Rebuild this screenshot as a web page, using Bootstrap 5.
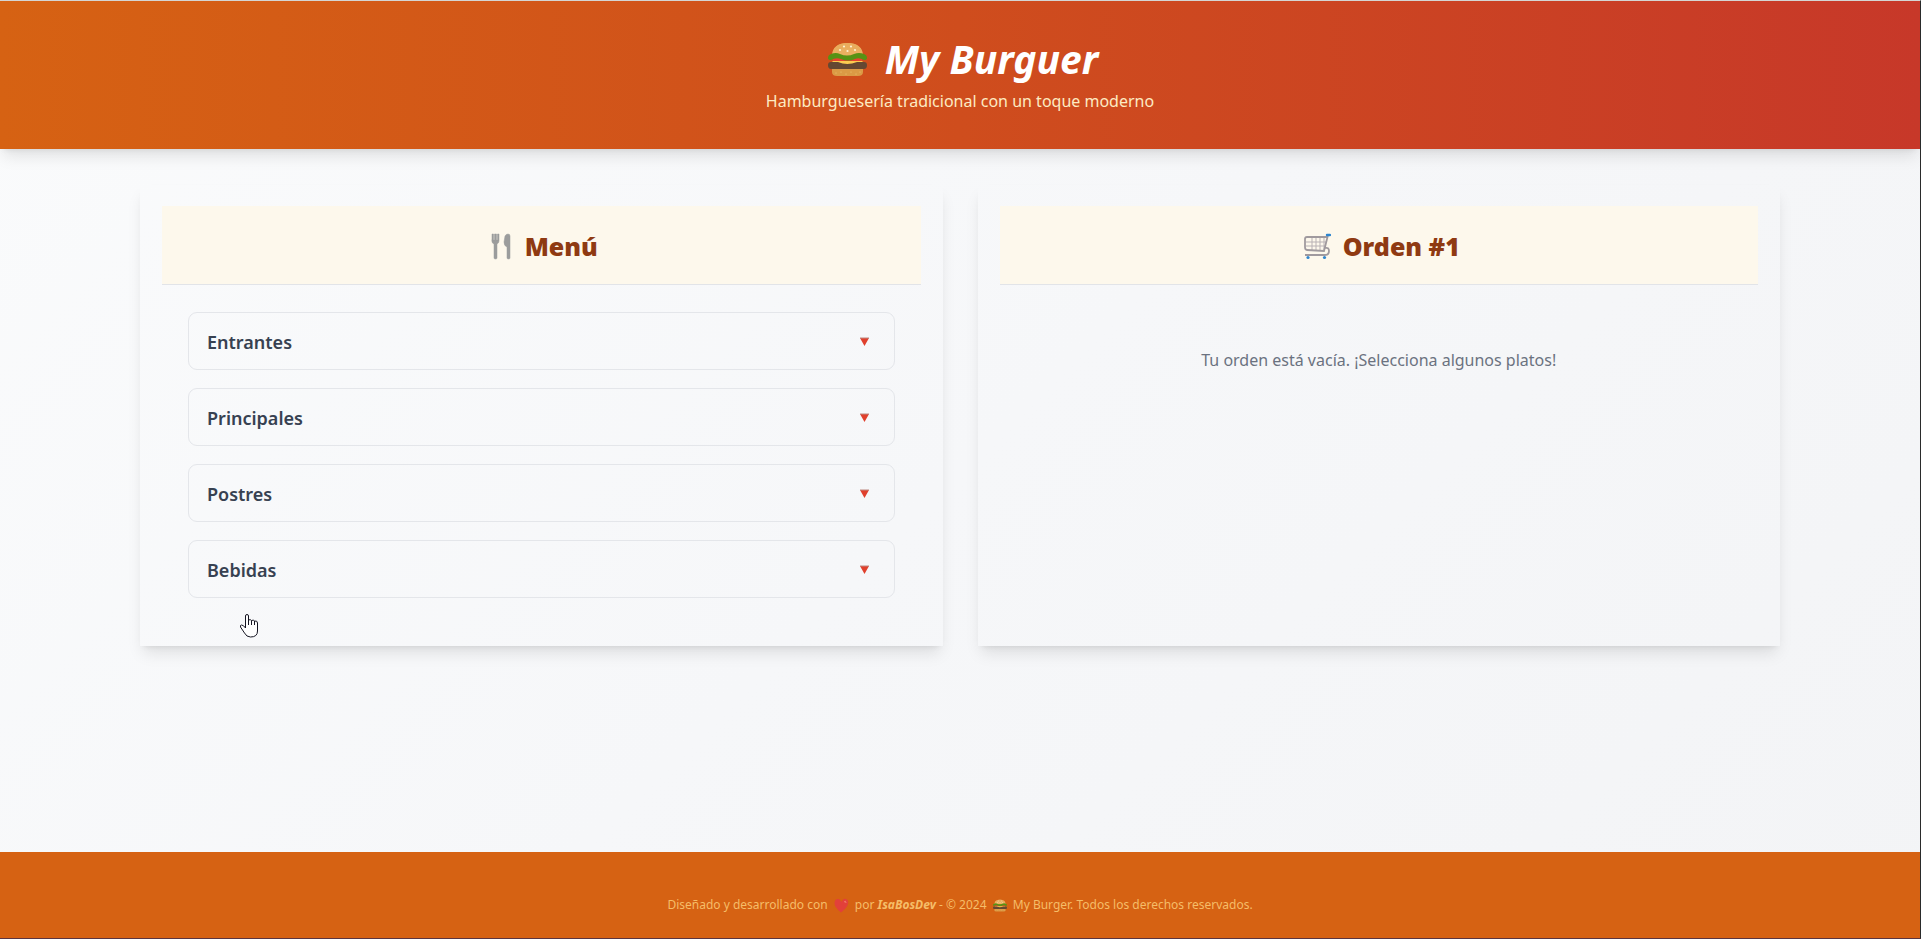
<!DOCTYPE html>
<html lang="es">
<head>
<meta charset="utf-8">
<meta name="viewport" content="width=device-width, initial-scale=1">
<title>My Burguer</title>
<link href="https://cdn.jsdelivr.net/npm/bootstrap@5.3.0/dist/css/bootstrap.min.css" rel="stylesheet">
<style>
  body {
    font-family: "Noto Sans", "Open Sans", sans-serif;
    background: linear-gradient(135deg, #fafbfc, #f6f7f9 50%, #f3f4f6);
    border: 1px solid #5b3540;
    border-width: 1px 1px 1px 0;
    border-color: #d5d5d3 #2a2b2b #5b3540;
  }
  .site-header {
    background: linear-gradient(90deg, #d66213, #cf4d1d 50%, #c73829);
    box-shadow: 0 10px 15px -3px rgba(0,0,0,.1), 0 4px 6px -4px rgba(0,0,0,.1);
    padding: 30px 0 34px;
  }
  .brand { font-size: 39px; line-height: 56px; font-weight: 700; font-style: italic; gap: 18px; padding-left: 6px; }
  .tagline { font-size: 16px; line-height: 28px; color: #fdebc3; }
  .board { width: 86%; max-width: 1640px; padding: 36px 0; }
  .board-grid { display: grid; grid-template-columns: repeat(2, minmax(0, 1fr)); gap: 35px; }
  .panel {
    padding: 21px 22px;
    box-shadow: 0 10px 15px -3px rgba(0,0,0,.1), 0 4px 6px -4px rgba(0,0,0,.1);
  }
  .panel-title {
    background: #fdf8ec; border-bottom: 1px solid #e2e4e8; color: #8f3a12;
    font-size: 25px; line-height: 36px; font-weight: 900; padding: 22px 0 20px 6px; gap: 12px;
  }
  .panel-body { padding: 27px 26px; gap: 18px; }
  .section-btn {
    height: 58px; padding: 2px 24px 0 18px; border: 1px solid #e4e6ea; border-radius: 9px;
    background: transparent; color: #374151; font-size: 18px; line-height: 28px; font-weight: 600;
  }
  .empty-order { color: #6b7280; font-size: 16px; line-height: 28px; padding-top: 61px; }
  .site-footer { background: #d66213; color: #f5bd68; font-size: 12px; line-height: 20px; padding: 43px 0 23px; }
  .site-footer svg { margin: 0 3px; }
  .pointer { left: 240px; top: 612px; }
  @media (max-width: 900px) { .board-grid { grid-template-columns: 1fr; } .pointer { display: none; } }
</style>
</head>
<body class="d-flex flex-column min-vh-100 position-relative">
<svg class="d-none" aria-hidden="true">
  <symbol id="burger" viewBox="0 0 39 34">
    <path d="M4 14C4 5 10 1 19.500 1S35 5 35 14z" fill="#eab061"/>
    <path d="M5 9C8 3 13 1 19.500 1S31 3 34 9C28 6 11 6 5 9z" fill="#e9ac5c"/>
    <g fill="#fdf1cf"><circle cx="16" cy="4.500" r="1.100"/><circle cx="23" cy="4.500" r="1.100"/><circle cx="12" cy="8" r="1.100"/><circle cx="19.500" cy="9" r="1.100"/><circle cx="27" cy="8" r="1.100"/></g>
    <path d="M5 15h29v5H5z" fill="#e8442f"/>
    <path d="M4 19h31l-2 2-7 1-7 2-7-2-6-1z" fill="#fccb50"/>
    <path d="M3 12q5-2 9 0 7 3 14 0 5-2 10 0 3 1 3 4 0 2-3 2-5-3-9-1-7 3-14 0-5-2-10 1-3 0-3-2 0-3 3-4z" fill="#579214"/>
    <path d="M3 20h7q9 4 19 0h7q3 0 3 3 0 4-3 4H3q-3 0-3-4 0-3 3-3z" fill="#644832"/>
    <path d="M4 27h31v3q0 4-5 4H9q-5 0-5-4z" fill="#db9a45"/>
    <g fill="#f0c478"><circle cx="8" cy="31" r=".6"/><circle cx="13" cy="30" r=".6"/><circle cx="18" cy="32" r=".6"/><circle cx="23" cy="30" r=".6"/><circle cx="28" cy="32" r=".6"/><circle cx="32" cy="30" r=".6"/></g>
  </symbol>
</svg>

<header class="site-header text-center text-white">
  <h1 class="brand d-flex justify-content-center align-items-center m-0">
    <svg width="39" height="34" aria-hidden="true"><use href="#burger"/></svg>My Burguer
  </h1>
  <p class="tagline m-0">Hamburguesería tradicional con un toque moderno</p>
</header>

<main class="board flex-grow-1 mx-auto">
  <div class="board-grid">
    <section class="panel">
      <h2 class="panel-title d-flex justify-content-center align-items-center m-0">
        <svg width="22" height="27" viewBox="0 0 22 27" aria-hidden="true">
          <path d="M1 1h1.500v6h1V1h2v6h1V1H8v7q0 2-2 3v14q0 1-1.500 1T3 25V11Q0 10 1 6zM14 3q1-2 3-2 2 0 2 2v22q0 1-1.500 1T16 25V14q-3-1-3-5z" fill="#9b9c9c" stroke="#9b9c9c" stroke-width=".5"/>
        </svg>Menú
      </h2>
      <div class="panel-body d-flex flex-column">
        <button type="button" class="section-btn d-flex justify-content-between align-items-center w-100">Entrantes <svg width="11" height="10" aria-hidden="true"><path d="M1 1h9L5.500 9z" fill="#e0402d"/><path d="M1 1h9" stroke="#bd8880"/></svg></button>
        <button type="button" class="section-btn d-flex justify-content-between align-items-center w-100">Principales <svg width="11" height="10" aria-hidden="true"><path d="M1 1h9L5.500 9z" fill="#e0402d"/><path d="M1 1h9" stroke="#bd8880"/></svg></button>
        <button type="button" class="section-btn d-flex justify-content-between align-items-center w-100">Postres <svg width="11" height="10" aria-hidden="true"><path d="M1 1h9L5.500 9z" fill="#e0402d"/><path d="M1 1h9" stroke="#bd8880"/></svg></button>
        <button type="button" class="section-btn d-flex justify-content-between align-items-center w-100">Bebidas <svg width="11" height="10" aria-hidden="true"><path d="M1 1h9L5.500 9z" fill="#e0402d"/><path d="M1 1h9" stroke="#bd8880"/></svg></button>
      </div>
    </section>
    <section class="panel">
      <h2 class="panel-title d-flex justify-content-center align-items-center m-0">
        <svg width="27" height="27" viewBox="0 0 27 27" fill="none" aria-hidden="true">
          <path d="M8 5v12M12 5v13M16 5v13M20 5v13M2 9h20M2 13h20" stroke="#b9b2b5"/>
          <path d="M24 2l-4 16L3 17Q1 17 1 14V6q0-2 2-2h20M21 15q4-1 4 3 0 4-4 4H1" stroke="#a09a9e" stroke-width="1.800"/>
          <path d="M23 2h3" stroke="#2f86cf" stroke-width="2.400" stroke-linecap="round"/>
          <circle cx="4" cy="24.500" r="1.600" fill="#2f86cf"/><circle cx="20.500" cy="24.500" r="1.600" fill="#2f86cf"/>
        </svg>Orden #1
      </h2>
      <p class="empty-order text-center m-0">Tu orden está vacía. ¡Selecciona algunos platos!</p>
    </section>
  </div>
</main>

<footer class="site-footer text-center">
  <p class="m-0">Diseñado y desarrollado con
    <svg width="15" height="15" viewBox="0 0 15 15" aria-hidden="true"><path d="M7 14.500Q0 9 .5 4.500 1 .5 4.500 1 6.500 1.500 7.500 4 9 0 12 1q3 1 2 5-1 4-7 8.500z" fill="#e2403a"/><path d="M10 4q2-2 2 1" stroke="#f27a70" fill="none"/></svg>
    por <strong class="fst-italic">IsaBosDev</strong> - © 2024
    <svg width="14" height="13" aria-hidden="true"><use href="#burger"/></svg>
    My Burger. Todos los derechos reservados.</p>
</footer>

<svg class="pointer position-absolute" width="19" height="26" viewBox="0 0 19 26" aria-hidden="true">
  <path d="M5.500 15V3Q5.500 1.500 7 1.500T8.500 3v4q2-1 3 .5 2-1 3 .5 3-.5 3 2v8q0 6-7 6-4 0-6-4l-4-6q-.5-2 1-2 2 0 4 3z" fill="#fff" stroke="#151522"/>
  <path d="M8.500 7v5M11.500 7.500V12M14.500 8v4" stroke="#151522" fill="none"/>
</svg>
<script src="https://cdn.jsdelivr.net/npm/bootstrap@5.3.0/dist/js/bootstrap.bundle.min.js"></script>
</body>
</html>
